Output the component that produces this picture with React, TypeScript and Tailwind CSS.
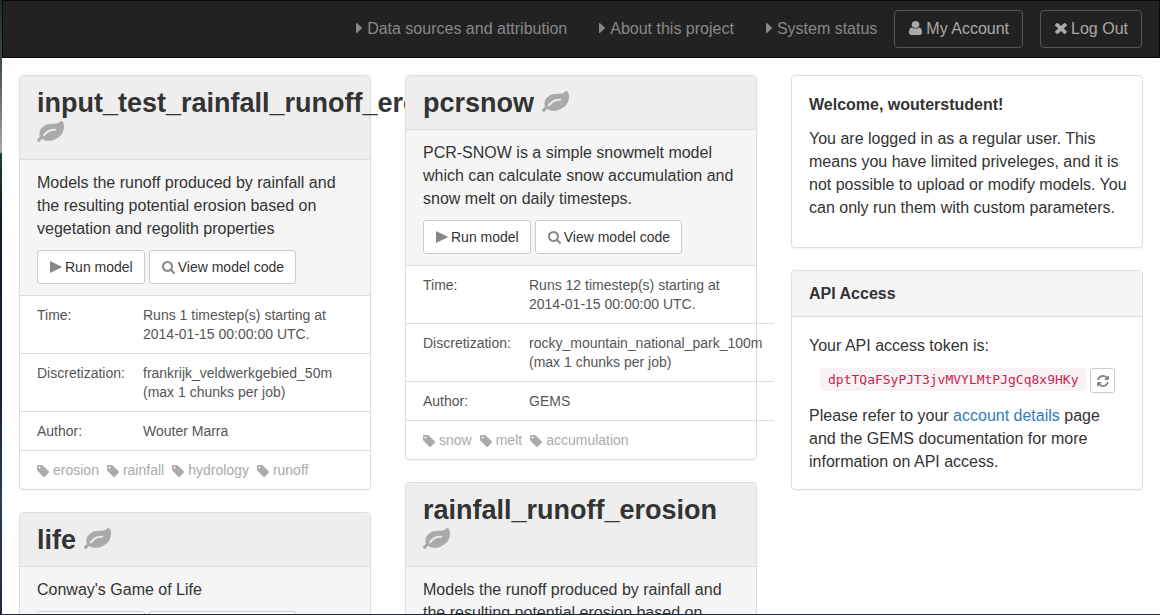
import React from 'react';

const ICONS = {
  caret: {
    box: '576 384 576 1024',
    d: 'M1152 896q0 26-19 45l-448 448q-19 19-45 19t-45-19-19-45v-896q0-26 19-45t45-19 45 19l448 448q19 19 19 45z',
  },
  user: {
    box: '256 128 1280 1536',
    d: 'M1536 1399q0 109-62.5 187t-150.5 78h-854q-88 0-150.5-78t-62.5-187q0-85 8.5-160.5t31.5-152 58.5-131 94-89 134.5-34.5q131 128 313 128t313-128q76 0 134.5 34.5t94 89 58.5 131 31.5 152 8.5 160.5zm-256-887q0 159-112.5 271.5t-271.5 112.5-271.5-112.5-112.5-271.5 112.5-271.5 271.5-112.5 271.5 112.5 112.5 271.5z',
  },
  times: {
    box: '302 366 1188 1188',
    d: 'M1490 1322q0 40-28 68l-136 136q-28 28-68 28t-68-28l-294-294-294 294q-28 28-68 28t-68-28l-136-136q-28-28-28-68t28-68l294-294-294-294q-28-28-28-68t28-68l136-136q28-28 68-28t68 28l294 294 294-294q28-28 68-28t68 28l136 136q28 28 28 68t-28 68l-294 294 294 294q28 28 28 68z',
  },
  leaf: {
    box: '0 128 1792 1408',
    d: 'M1280 704q0-26-19-45t-45-19q-172 0-318 49.5t-259.5 134-235.5 219.5q-19 21-19 45 0 26 19 45t45 19q24 0 45-19 27-24 74-71t67-66q137-124 268.5-176t313.5-52q26 0 45-19t19-45zm512-198q0 95-20 193-46 224-184.5 383t-357.5 268q-214 108-438 108-148 0-286-47-15-5-88-42t-96-37q-16 0-39.5 32t-45 70-52.5 70-60 32q-43 0-63.5-17.5t-45.5-59.5q-2-4-6-11t-5.5-10-3-9.5-1.5-13.5q0-35 31-73.5t68-65.5 68-56 31-48q0-4-14-38t-16-44q-9-51-9-104 0-115 43.5-220t119-184.5 170.5-139 204-95.5q55-18 145-25.5t179.5-9 178.5-6 163.5-24 113.5-56.5l29.5-29.5 29.5-28 27-20 36.5-16 43.5-4.5q39 0 70.5 46t47.5 112 24 124 8 96z',
  },
  play: {
    box: '192 104 1408 1584',
    d: 'M1576 927l-1328 738q-23 13-39.5 3t-16.5-36v-1472q0-26 16.5-36t39.5 3l1328 738q23 13 23 31t-23 31z',
  },
  search: {
    box: '64 128 1664 1664',
    d: 'M1216 832q0-185-131.5-316.5t-316.5-131.5-316.5 131.5-131.5 316.5 131.5 316.5 316.5 131.5 316.5-131.5 131.5-316.5zm512 832q0 52-38 90t-90 38q-54 0-90-38l-343-342q-179 124-399 124-143 0-273.5-55.5t-225-150-150-225-55.5-273.5 55.5-273.5 150-225 225-150 273.5-55.5 273.5 55.5 225 150 150 225 55.5 273.5q0 220-124 399l343 343q37 37 37 90z',
  },
  tag: {
    box: '128 128 1516 1516',
    d: 'M576 448q0-53-37.5-90.5t-90.5-37.5-90.5 37.5-37.5 90.5 37.5 90.5 90.5 37.5 90.5-37.5 37.5-90.5zm1067 576q0 53-37 90l-491 492q-39 37-91 37-53 0-90-37l-715-716q-38-37-64.5-101t-26.5-117v-416q0-52 38-90t90-38h416q53 0 117 26.5t102 64.5l715 714q37 39 37 91z',
  },
  refresh: {
    box: '128 128 1536 1536',
    d: 'M1639 1056q0 5-1 7-64 268-268 434.5t-478 166.5q-146 0-282.5-55t-243.5-157l-129 129q-19 19-45 19t-45-19-19-45v-448q0-26 19-45t45-19h448q26 0 45 19t19 45-19 45l-137 137q71 66 161 102t187 36q134 0 250-65t186-179q11-17 53-117 8-23 30-23h192q13 0 22.5 9.5t9.5 22.5zm25-800v448q0 26-19 45t-45 19h-448q-26 0-45-19t-19-45 19-45l138-138q-148-137-349-137-134 0-250 65t-186 179q-11 17-53 117-8 23-30 23h-199q-13 0-22.5-9.5t-9.5-22.5v-7q65-268 270-434.5t480-166.5q146 0 284 55.5t245 156.5l130-129q19-19 45-19t45 19 19 45z',
  },
};

function Icon({ name, className }: { name: keyof typeof ICONS; className: string }) {
  return (
    <svg
      viewBox={ICONS[name].box}
      preserveAspectRatio="none"
      fill="currentColor"
      aria-hidden="true"
      className={`shrink-0 ${className}`}
    >
      <path d={ICONS[name].d} />
    </svg>
  );
}

interface Model {
  name: string;
  description: string;
  timesteps: number;
  discretization: string;
  author: string;
  tags: string[];
}

const RUNOFF_TEXT =
  'Models the runoff produced by rainfall and the resulting potential erosion based on vegetation and regolith properties';

const columns: Model[][] = [
  [
    {
      name: 'input_test_rainfall_runoff_erosion',
      description: RUNOFF_TEXT,
      timesteps: 1,
      discretization: 'frankrijk_veldwerkgebied_50m',
      author: 'Wouter Marra',
      tags: ['erosion', 'rainfall', 'hydrology', 'runoff'],
    },
    {
      name: 'life',
      description: "Conway's Game of Life",
      timesteps: 1,
      discretization: 'frankrijk_veldwerkgebied_50m',
      author: 'GEMS',
      tags: ['life'],
    },
  ],
  [
    {
      name: 'pcrsnow',
      description:
        'PCR-SNOW is a simple snowmelt model which can calculate snow accumulation and snow melt on daily timesteps.',
      timesteps: 12,
      discretization: 'rocky_mountain_national_park_100m',
      author: 'GEMS',
      tags: ['snow', 'melt', 'accumulation'],
    },
    {
      name: 'rainfall_runoff_erosion',
      description: RUNOFF_TEXT,
      timesteps: 1,
      discretization: 'frankrijk_veldwerkgebied_50m',
      author: 'Wouter Marra',
      tags: ['erosion', 'rainfall'],
    },
  ],
];

function Card({ children }: { children: React.ReactNode }) {
  return (
    <section className="mb-[22px] rounded border border-[#ddd] bg-white shadow-[0_1px_1px_rgba(0,0,0,0.05)]">
      {children}
    </section>
  );
}

function ActionButton({ icon, children }: { icon: React.ReactNode; children: React.ReactNode }) {
  return (
    <button
      type="button"
      className="flex h-[34px] items-center gap-[3px] rounded-[3px] border border-[#ccc] bg-white pr-[11px] pl-3 text-sm text-[#333]"
    >
      {icon}
      {children}
    </button>
  );
}

function Row({ label, children }: { label: string; children: React.ReactNode }) {
  return (
    <tr className="border-b border-[#ddd] align-top">
      <th scope="row" className="w-[123px] min-w-[123px] pt-[10px] pb-[9px] pl-[17px] text-left font-normal">
        {label}
      </th>
      <td className="pt-[10px] pr-3 pb-[9px]">{children}</td>
    </tr>
  );
}

function ModelCard({ model }: { model: Model }) {
  return (
    <Card>
      <h2 className="rounded-t border-b border-[#ddd] bg-[#eee] px-[17px] pt-3 pb-[11px] text-[27px] leading-[30px] font-bold text-[#333]">
        {model.name} <Icon name="leaf" className="inline-block h-[21px] w-[27px] align-baseline text-[#aaa]" />
      </h2>
      <div className="border-b border-[#ddd] bg-[#f5f5f5] px-[17px] py-[11px]">
        <p>{model.description}</p>
        <div className="mt-[10px] flex gap-1">
          <ActionButton icon={<Icon name="play" className="h-3 w-3 text-[#888]" />}>Run model</ActionButton>
          <ActionButton icon={<Icon name="search" className="h-[13px] w-[13px] text-[#888]" />}>
            View model code
          </ActionButton>
        </div>
      </div>
      <table className="w-full border-collapse text-sm leading-[19px] text-[#555]">
        <tbody>
          <Row label="Time:">
            Runs {model.timesteps} timestep(s) starting at{' '}
            <span className="whitespace-nowrap">2014-01-15 00:00:00 UTC.</span>
          </Row>
          <Row label="Discretization:">{model.discretization} (max 1 chunks per job)</Row>
          <Row label="Author:">{model.author}</Row>
        </tbody>
      </table>
      <ul className="flex gap-2 px-[17px] pt-[10px] pb-[9px] text-sm leading-[19px] text-[#aaa]">
        {model.tags.map((tag) => (
          <li key={tag} className="flex items-center gap-1">
            <Icon name="tag" className="h-3 w-3" />
            {tag}
          </li>
        ))}
      </ul>
    </Card>
  );
}

function NavLink({ children }: { children: React.ReactNode }) {
  return (
    <a href="#" className="flex items-center gap-[5px] text-[#888]">
      <Icon name="caret" className="h-[10px] w-[6px]" />
      {children}
    </a>
  );
}

function NavButton({ icon, children }: { icon: React.ReactNode; children: React.ReactNode }) {
  return (
    <button
      type="button"
      className="ml-[17px] flex h-[38px] items-center gap-1 rounded border border-[#555] pr-[13px] pb-[2px] pl-[14px] text-[#aaa]"
    >
      {icon}
      {children}
    </button>
  );
}

export default function App() {
  return (
    <div className="h-screen bg-[linear-gradient(to_bottom,#1c2b30_0px,#3a4a4c_60px,#a3aaa8_152px,#1f3a36_154px,#0e1c2c_220px,#14243c_400px,#2b3c58_500px,#1c2b3c_100%)] pb-px pl-[2px] font-['Liberation_Sans',Arial,sans-serif] text-base leading-[23px] text-[#333]">
      <div className="h-full overflow-hidden bg-white">
        <header className="flex h-[58px] items-center justify-end border border-[#080808] bg-[#222] pr-[17px]">
          <nav className="flex gap-8 pb-[2px]">
            <NavLink>Data sources and attribution</NavLink>
            <NavLink>About this project</NavLink>
            <NavLink>System status</NavLink>
          </nav>
          <NavButton icon={<Icon name="user" className="h-[14px] w-[13px]" />}>My Account</NavButton>
          <NavButton icon={<Icon name="times" className="h-[11px] w-3" />}>Log Out</NavButton>
        </header>
        <main className="flex pt-[17px]">
          {columns.map((models, index) => (
            <div key={index} className="min-w-0 flex-1 px-[17px]">
              {models.map((model) => (
                <ModelCard key={model.name} model={model} />
              ))}
            </div>
          ))}
          <aside className="min-w-0 flex-1 px-[17px]">
            <Card>
              <div className="pt-[17px] pr-3 pb-7 pl-[17px]">
                <h3 className="mb-[11px] font-bold">Welcome, wouterstudent!</h3>
                <p>
                  You are logged in as a regular user. This means you have limited priveleges, and it is not
                  possible to upload or modify models. You can only run them with custom parameters.
                </p>
              </div>
            </Card>
            <Card>
              <h3 className="rounded-t border-b border-[#ddd] bg-[#f5f5f5] px-[17px] py-[11px] font-bold">
                API Access
              </h3>
              <div className="px-[17px] pt-[17px] pb-4">
                <p>Your API access token is:</p>
                <div className="my-[11px] ml-[11px] flex items-start gap-1">
                  <code className="rounded bg-[#f9f2f4] px-2 font-['DejaVu_Sans_Mono',monospace] text-[13px] text-[#c7254e]">
                    dptTQaFSyPJT3jvMVYLMtPJgCq8x9HKy
                  </code>
                  <button
                    type="button"
                    aria-label="Refresh token"
                    className="flex h-[25px] w-[25px] items-center justify-center rounded-[3px] border border-[#ccc] bg-white text-[#888]"
                  >
                    <Icon name="refresh" className="h-3 w-3" />
                  </button>
                </div>
                <p>
                  Please refer to your{' '}
                  <a href="#" className="text-[#337ab7]">
                    account details
                  </a>{' '}
                  page and the GEMS documentation for more information on API access.
                </p>
              </div>
            </Card>
          </aside>
        </main>
      </div>
    </div>
  );
}
